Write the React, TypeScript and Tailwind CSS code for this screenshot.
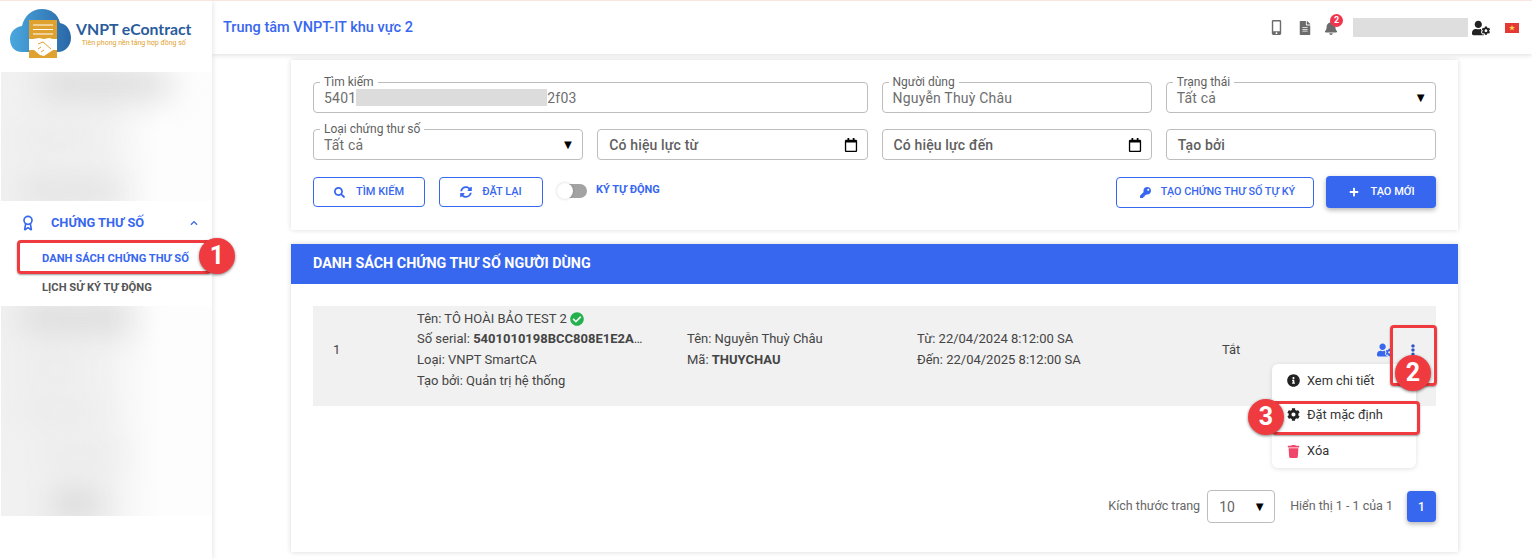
import { FaBell, FaCheckCircle, FaCog, FaEllipsisV, FaFileAlt, FaInfoCircle, FaKey, FaMobileAlt, FaPlus, FaRegCalendar, FaSearch, FaSyncAlt, FaTrash, FaUserCog, FaChevronUp } from 'react-icons/fa'
import { Award } from 'lucide-react'

function Logo() {
    return (
        <div className="h-[71px] shrink-0 flex items-start">
            <svg width="64" height="52" viewBox="0 0 64 52" className="ml-[9px] mt-[7px] shrink-0">
                <defs>
                    <linearGradient id="cloud" x1="0" x2="1" y1="0" y2="0">
                        <stop offset="0" stopColor="#4aa8de" />
                        <stop offset="1" stopColor="#2a67a8" />
                    </linearGradient>
                </defs>
                <path d="M13 44C5 44 1 38 1 31c0-7 5-12 12-13C15 8 23 1 33 1c9 0 16 5 18 14 7 1 11 8 11 15 0 8-6 14-13 14z" fill="url(#cloud)" />
                <rect x="20" y="12" width="28" height="38" fill="#dfa22e" />
                <path d="M24 17h20M24 21.5h20M24 26h20" stroke="#fff" strokeWidth="1" />
                <path d="M20 31l4 0 6-1 5 1 5-1 4 1h4v11h-4l-9 6-4-1-6-5h-5z" fill="#fff" />
                <path d="M29 36l5-2 8 7M32 44l3-2M29 41l3-2" stroke="#dfa22e" strokeWidth="1" fill="none" />
            </svg>
            <div className="ml-[3px] mt-[20px] flex flex-col items-center">
                <span className="font-['Lato',sans-serif] font-bold text-[15.8px] leading-[16px] text-[#2b5c9c] whitespace-nowrap">VNPT eContract</span>
                <span className="text-[7px] leading-[10px] mt-[1px] text-[#dfa22e] whitespace-nowrap">Tiên phong nền tảng hợp đồng số</span>
            </div>
        </div>
    )
}

function Blur({ rows, className }: { rows: string[]; className: string }) {
    return (
        <div className={`overflow-hidden ml-px bg-gradient-to-r from-[#f1f1f1] via-[#f3f3f3] via-50% to-[#fdfdfd] to-75% ${className}`}>
            <div className="h-full flex flex-col justify-between blur-lg">
                {rows.map((r, i) => (
                    <div key={i} className={r} />
                ))}
            </div>
        </div>
    )
}

function Sidebar() {
    return (
        <aside className="w-[212px] shrink-0 bg-white shadow-[1px_0_5px_rgba(0,0,0,0.1)] flex flex-col z-30">
            <Logo />
            <Blur
                className="h-[129px]"
                rows={['h-6 w-[130px] ml-[40px] bg-[#d6d6d6]', 'h-3 w-[80px] ml-[20px] bg-[#e4e4e4]', 'h-5 w-[100px] ml-[20px] bg-[#dcdcdc]']}
            />
            <div className="h-[105px] shrink-0 pt-[12px]">
                <div className="flex items-center h-[20px] pl-[20px] text-[#3867ef]">
                    <Award size={16} strokeWidth={2.5} />
                    <span className="ml-[15px] text-[12.8px] font-bold whitespace-nowrap">CHỨNG THƯ SỐ</span>
                    <FaChevronUp size={8} className="ml-[46px]" />
                </div>
                <div className="pl-[42px] mt-[19px] text-[11.2px] font-bold leading-[14px] text-[#3867ef] whitespace-nowrap">DANH SÁCH CHỨNG THƯ SỐ</div>
                <div className="pl-[42px] mt-[15px] text-[11.2px] font-bold leading-[14px] text-[#555] whitespace-nowrap">LỊCH SỬ KÝ TỰ ĐỘNG</div>
            </div>
            <Blur
                className="h-[210px]"
                rows={['h-6 w-[110px] ml-[20px] bg-[#d6d6d6]', 'h-3 w-[70px] ml-[20px] bg-[#e4e4e4]', 'h-3 w-[80px] ml-[20px] bg-[#e2e2e2]', 'h-3 w-[80px] ml-[40px] bg-[#e2e2e2]', 'h-6 w-[50px] ml-[50px] bg-[#d2d2d2]']}
            />
        </aside>
    )
}

function Header() {
    return (
        <header className="h-[53px] shrink-0 bg-white shadow-[0_1px_5px_rgba(0,0,0,0.14)] flex items-center z-20">
            <span className="ml-[11px] text-[14.5px] font-medium text-[#3867ef]">Trung tâm VNPT-IT khu vực 2</span>
            <div className="ml-auto flex items-center text-[#6b6b6b]">
                <FaMobileAlt size={15} />
                <FaFileAlt size={14} className="ml-[14px]" />
                <div className="ml-[12px] relative">
                    <FaBell size={14} />
                    <span className="absolute -top-[7px] left-[6px] w-[13px] h-[13px] rounded-full bg-[#f0364f] text-white text-[9px] font-bold leading-[13px] text-center">2</span>
                </div>
                <div className="ml-[15px] w-[115px] h-[19px] bg-[#dedede]" />
                <FaUserCog size={18} className="ml-[4px] text-[#222]" />
                <svg width="14" height="10" viewBox="0 0 14 10" className="ml-[15px] mr-[13px]">
                    <rect width="14" height="10" fill="#e53935" />
                    <path d="M7 2l.8 2.1H10L8.2 5.4l.7 2.1L7 6.2 5.1 7.5l.7-2.1L4 4.1h2.2z" fill="#ffd54a" />
                </svg>
            </div>
        </header>
    )
}

function Field({ label, value, arrow, date, bold }: { label?: string; value: string; arrow?: boolean; date?: boolean; bold?: boolean }) {
    return (
        <div className="relative h-[31px] border border-[#bdbdbd] rounded-[4px] flex items-center pl-[10px] pr-[10px] bg-white">
            {label && <span className="absolute -top-[8px] left-[6px] px-[4px] bg-white text-[12px] leading-[14px] text-[#5f5f5f]">{label}</span>}
            <span className={bold ? 'pt-[2px] text-[14px] font-medium text-[#5f5f5f] pl-[1px] tracking-[0.15px]' : 'pt-[2px] text-[14px] text-[#6e6e6e] tracking-[0.2px]'}>{value}</span>
            {arrow && <span className="ml-auto mr-[-2px] text-[13px] text-black">▼</span>}
            {date && <FaRegCalendar size={14} className="ml-auto mr-[-1px] text-black" />}
        </div>
    )
}

function SearchCard() {
    return (
        <section className="h-[170px] bg-white shadow-[0_0_5px_rgba(0,0,0,0.14)] px-[22px] pt-[22px]">
            <div className="grid grid-cols-4 gap-x-[14px] gap-y-[16px]">
                <div className="col-span-2 relative h-[31px] border border-[#bdbdbd] rounded-[4px] flex items-center pl-[10px] text-[14px] text-[#6e6e6e] tracking-[0.2px]">
                    <span className="absolute -top-[8px] left-[6px] px-[4px] bg-white text-[12px] leading-[14px] text-[#5f5f5f] tracking-normal">Tìm kiếm</span>
                    <span className="pt-[2px]">5401</span>
                    <span className="w-[191px] h-[17px] bg-[#dcdcdc]" />
                    <span className="pt-[2px]">2f03</span>
                </div>
                <Field label="Người dùng" value="Nguyễn Thuỳ Châu" />
                <Field label="Trạng thái" value="Tất cả" arrow />
                <Field label="Loại chứng thư số" value="Tất cả" arrow />
                <Field value="Có hiệu lực từ" date bold />
                <Field value="Có hiệu lực đến" date bold />
                <Field value="Tạo bởi" bold />
            </div>
            <div className="flex items-center mt-[16px] h-[32px]">
                <button className="w-[112px] h-[30px] border border-[#3867ef] rounded-[4px] flex items-center justify-center text-[#3867ef] text-[11px] font-medium">
                    <FaSearch size={11} />
                    <span className="ml-[11px]">TÌM KIẾM</span>
                </button>
                <button className="ml-[14px] w-[104px] h-[30px] border border-[#3867ef] rounded-[4px] flex items-center justify-center text-[#3867ef] text-[11px] font-medium">
                    <FaSyncAlt size={12} />
                    <span className="ml-[10px]">ĐẶT LẠI</span>
                </button>
                <div className="ml-[15px] relative w-[29px] h-[14px] rounded-full bg-[#a3a3a3] mb-[2px]">
                    <div className="absolute -left-[1px] -top-[1px] w-[16px] h-[16px] rounded-full bg-white shadow-[0_0_3px_rgba(0,0,0,0.2)]" />
                </div>
                <span className="ml-[9px] mb-[3px] text-[11px] font-bold text-[#3867ef]">KÝ TỰ ĐỘNG</span>
                <button className="ml-auto w-[198px] h-[31px] border border-[#3867ef] rounded-[4px] flex items-center justify-center text-[#3867ef] text-[10.8px] font-medium pl-[5px]">
                    <FaKey size={11} />
                    <span className="ml-[10px]">TẠO CHỨNG THƯ SỐ TỰ KÝ</span>
                </button>
                <button className="ml-[12px] w-[110px] h-[32px] rounded-[4px] bg-[#3867ef] shadow-[0_2px_5px_rgba(0,0,0,0.3)] flex items-center justify-center text-white text-[11px] font-medium pl-[2px]">
                    <FaPlus size={10} />
                    <span className="ml-[11px]">TẠO MỚI</span>
                </button>
            </div>
        </section>
    )
}

function Row() {
    return (
        <div className="h-[100px] mx-[22px] pb-[12px] bg-[#f1f1f1] flex items-center text-[13px] leading-[20.6px] text-[#444]">
            <div className="w-[104px] pl-[20px]">1</div>
            <div className="w-[270px]">
                <div className="flex items-center">Tên: TÔ HOÀI BẢO TEST 2<FaCheckCircle size={14} className="ml-[3px] text-[#22b14c]" /></div>
                <div>Số serial: <b className="font-bold">5401010198BCC808E1E2A</b>…</div>
                <div>Loại: VNPT SmartCA</div>
                <div>Tạo bởi: Quản trị hệ thống</div>
            </div>
            <div className="w-[230px]">
                <div>Tên: Nguyễn Thuỳ Châu</div>
                <div>Mã: <b className="font-bold">THUYCHAU</b></div>
            </div>
            <div className="w-[305px]">
                <div>Từ: 22/04/2024 8:12:00 SA</div>
                <div>Đến: 22/04/2025 8:12:00 SA</div>
            </div>
            <div className="w-[155px]">Tắt</div>
            <FaUserCog size={16} className="text-[#3867ef]" />
            <FaEllipsisV size={12} className="ml-[14px] text-[#2f55c4]" />
        </div>
    )
}

function Menu() {
    return (
        <div className="absolute left-[981px] top-[120px] w-[144px] h-[104px] bg-white rounded-[6px] shadow-[0_1px_5px_rgba(0,0,0,0.12)] flex flex-col text-[12.8px] text-[#333] pl-[15px] z-10">
            <div className="h-[33px] flex items-center"><FaInfoCircle size={13} className="text-[#222]" /><span className="ml-[7px]">Xem chi tiết</span></div>
            <div className="h-[35px] flex items-center"><FaCog size={13} className="text-[#222]" /><span className="ml-[7px]">Đặt mặc định</span></div>
            <div className="h-[36px] pt-[2px] flex items-center"><FaTrash size={13} className="text-[#f0466a]" /><span className="ml-[7px]">Xóa</span></div>
        </div>
    )
}

function ListCard() {
    return (
        <section className="relative mt-[14px] h-[308px] bg-white shadow-[0_0_5px_rgba(0,0,0,0.16)]">
            <div className="h-[40px] bg-[#3867ef] flex items-center pl-[22px] text-white text-[14.3px] font-bold">DANH SÁCH CHỨNG THƯ SỐ NGƯỜI DÙNG</div>
            <div className="pt-[22px]">
                <Row />
            </div>
            <div className="flex items-center justify-end mx-[22px] mt-[84px] text-[12.5px] text-[#666]">
                <span>Kích thước trang</span>
                <div className="ml-[7px] w-[68px] h-[33px] border border-[#bdbdbd] rounded-[4px] flex items-center pl-[11px] pr-[8px] text-[14px]">
                    <span className="pt-[2px]">10</span>
                    <span className="ml-auto text-[13px] text-black">▼</span>
                </div>
                <span className="ml-[15px]">Hiển thị 1 - 1 của 1</span>
                <button className="ml-[14px] w-[29px] h-[31px] rounded-[4px] bg-[#3867ef] text-white text-[12px] font-medium shadow-[0_2px_5px_rgba(0,0,0,0.3)]">1</button>
            </div>
            <Menu />
        </section>
    )
}

function Marker({ n, className }: { n: string; className: string }) {
    return (
        <div className={`absolute w-[36px] h-[36px] rounded-full bg-[#ef3b3f] shadow-[0_1px_3px_rgba(0,0,0,0.5)] flex items-center justify-center text-white text-[25px] font-bold z-50 ${className}`}>{n}</div>
    )
}

export default function App() {
    return (
        <div className="relative w-[1532px] h-[559px] overflow-hidden bg-white font-['Roboto',sans-serif] border-t border-[#f8e6de] flex">
            <Sidebar />
            <div className="flex-1 min-w-0 flex flex-col">
                <Header />
                <main className="w-[1167px] ml-[79px] pt-[6px]">
                    <SearchCard />
                    <ListCard />
                </main>
            </div>

            <div className="absolute left-[17px] top-[239px] w-[194px] h-[34px] border-[3px] border-[#ef3b3f] rounded-[4px] shadow-[0_1px_2px_rgba(0,0,0,0.4)] z-40" />
            <Marker n="1" className="left-[199px] top-[237px]" />
            <div className="absolute left-[1390px] top-[324px] w-[47px] h-[61px] border-[3px] border-[#ef3b3f] rounded-[4px] shadow-[0_1px_2px_rgba(0,0,0,0.4)] z-40" />
            <Marker n="2" className="left-[1395px] top-[354px]" />
            <div className="absolute left-[1272px] top-[400px] w-[148px] h-[34px] border-[3px] border-[#ef3b3f] rounded-[4px] shadow-[0_1px_2px_rgba(0,0,0,0.4)] z-40" />
            <Marker n="3" className="left-[1248px] top-[398px]" />
        </div>
    )
}
